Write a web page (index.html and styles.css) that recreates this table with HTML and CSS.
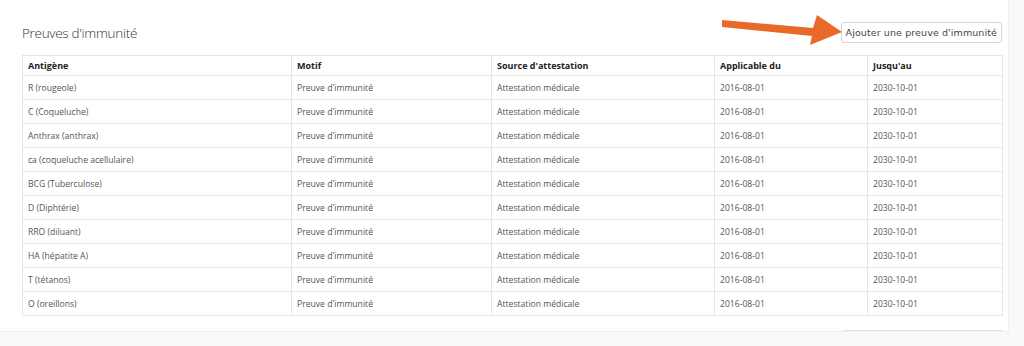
FILE: index.html
```html
<!DOCTYPE html>
<html lang="fr">
<head>
  <meta charset="UTF-8" />
  <title>Preuves d'immunité</title>
  <link rel="stylesheet" href="styles.css">
</head>
<body>

<div class="panel">
  <div class="panel-head">
    <h2>Preuves d'immunité</h2>
    <button class="btn-add">Ajouter une preuve d'immunité</button>
  </div>

  <table class="immunity">
    <thead>
      <tr>
        <th class="c1">Antigène</th>
        <th class="c2">Motif</th>
        <th class="c3">Source d'attestation</th>
        <th class="c4">Applicable du</th>
        <th class="c5">Jusqu'au</th>
      </tr>
    </thead>
    <tbody>
      <tr><td>R (rougeole)</td><td>Preuve d'immunité</td><td>Attestation médicale</td><td>2016-08-01</td><td>2030-10-01</td></tr>
      <tr><td>C (Coqueluche)</td><td>Preuve d'immunité</td><td>Attestation médicale</td><td>2016-08-01</td><td>2030-10-01</td></tr>
      <tr><td>Anthrax (anthrax)</td><td>Preuve d'immunité</td><td>Attestation médicale</td><td>2016-08-01</td><td>2030-10-01</td></tr>
      <tr><td>ca (coqueluche acellulaire)</td><td>Preuve d'immunité</td><td>Attestation médicale</td><td>2016-08-01</td><td>2030-10-01</td></tr>
      <tr><td>BCG (Tuberculose)</td><td>Preuve d'immunité</td><td>Attestation médicale</td><td>2016-08-01</td><td>2030-10-01</td></tr>
      <tr><td>D (Diphtérie)</td><td>Preuve d'immunité</td><td>Attestation médicale</td><td>2016-08-01</td><td>2030-10-01</td></tr>
      <tr><td>RRO (diluant)</td><td>Preuve d'immunité</td><td>Attestation médicale</td><td>2016-08-01</td><td>2030-10-01</td></tr>
      <tr><td>HA (hépatite A)</td><td>Preuve d'immunité</td><td>Attestation médicale</td><td>2016-08-01</td><td>2030-10-01</td></tr>
      <tr><td>T (tétanos)</td><td>Preuve d'immunité</td><td>Attestation médicale</td><td>2016-08-01</td><td>2030-10-01</td></tr>
      <tr><td>O (oreillons)</td><td>Preuve d'immunité</td><td>Attestation médicale</td><td>2016-08-01</td><td>2030-10-01</td></tr>
    </tbody>
  </table>

  <div class="panel-foot">
    <span class="foot-btn"></span>
  </div>
</div>

<!-- annotation arrow -->
<svg class="arrow" width="130" height="40" viewBox="0 0 130 40">
  <polygon points="0,5 91,13 95,0 120,17 88,30 90,21 0,12" fill="#e8692a" />
</svg>

</body>
</html>
```

FILE: styles.css
```css
* { margin: 0; padding: 0; box-sizing: border-box; }

body {
  font-family: 'Open Sans', sans-serif;
  background: #f9f9f9;
  color: #555;
  position: relative;
  height: 346px;
  overflow: hidden;
}

.panel {
  width: 1009px;
  background: #fff;
  border-right: 1px solid #efefef;
  border-bottom: 1px solid #f0f0f0;
  padding: 0 6px 0 22px;
}

.panel-head {
  display: flex;
  justify-content: space-between;
  align-items: center;
  height: 55px;
  padding-top: 11px;
}

.panel-head h2 {
  font-size: 13.5px;
  font-weight: 300;
  color: #333;
  letter-spacing: -0.3px;
}

.btn-add {
  font-family: 'DejaVu Sans', sans-serif;
  font-size: 9.5px;
  color: #444;
  background: #fff;
  border: 1px solid #d6d6d6;
  border-radius: 3px;
  height: 21px;
  padding: 0 4px;
  letter-spacing: 0.1px;
  white-space: nowrap;
  margin-top: -1px;
}

.immunity {
  width: 980px;
  border-collapse: collapse;
  table-layout: fixed;
  font-size: 8.6px;
}

.immunity th, .immunity td {
  border: 1px solid #e6e6e6;
  text-align: left;
  padding: 0 5px;
  white-space: nowrap;
}

.immunity th {
  height: 20px;
  font-size: 9px;
  font-weight: 700;
  color: #222;
}

.immunity td {
  height: 24px;
  color: #555;
}

.c1 { width: 269px; }
.c2 { width: 200px; }
.c3 { width: 223px; }
.c4 { width: 153px; }
.c5 { width: 135px; }

.panel-foot {
  display: flex;
  justify-content: flex-end;
  height: 15px;
  padding-top: 14px;
}

.foot-btn {
  display: block;
  width: 159px;
  height: 1px;
  background: #e4e4e4;
}

.arrow {
  position: absolute;
  left: 722px;
  top: 15px;
}
```
